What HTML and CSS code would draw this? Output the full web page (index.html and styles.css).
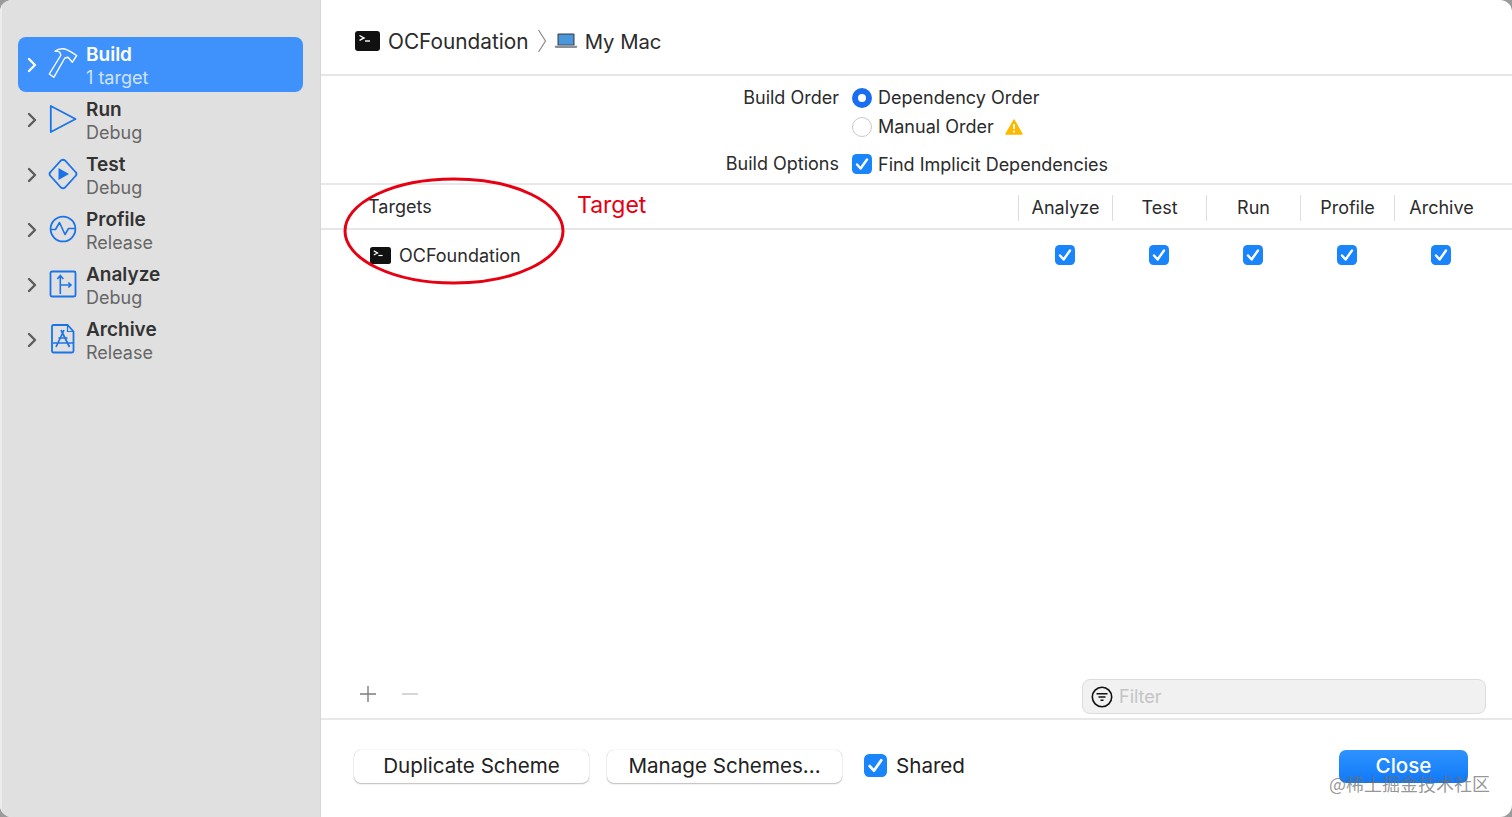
FILE: index.html
```html
<!DOCTYPE html>
<html lang="en">
<head>
<meta charset="utf-8">
<title>Scheme Editor</title>
<link rel="stylesheet" href="styles.css">
</head>
<body>
<svg class="defs" width="0" height="0" aria-hidden="true">
  <defs>
    <symbol id="chev" viewBox="0 0 10 16"><path d="M2 2l6 6-6 6" fill="none" stroke="currentColor" stroke-width="2.4" stroke-linecap="round" stroke-linejoin="round"/></symbol>
    <symbol id="term" viewBox="0 0 25 20"><rect x="0" y="0" width="25" height="20" rx="3" fill="#111"/><path d="M4.500 4.500l4.500 2.400-4.500 2.400" fill="none" stroke="#fff" stroke-width="1.400"/><path d="M10 10h5" stroke="#fff" stroke-width="1.400"/></symbol>
    <symbol id="check" viewBox="0 0 20 20"><rect width="20" height="20" rx="4.500" fill="#1a84fb"/><path d="M5 10.500l3.600 4L15 5.500" fill="none" stroke="#fff" stroke-width="2.400" stroke-linecap="round" stroke-linejoin="round"/></symbol>
  </defs>
</svg>
<div class="window">
  <aside class="sidebar">
    <div class="action selected">
      <svg class="chev"><use href="#chev"/></svg>
      <svg class="action-icon" viewBox="0 0 30 34"><path transform="translate(0 1)" d="M1.300 26L5.800 29.300 16.800 10l3.200-.8 4.400 5 4.300-6.700C24 5 20 1 15 .8c-3-.1-6 .7-8 2.400 2.500-.2 5 .8 5.500 2.800l.2 1.500z" fill="none" stroke="#fff" stroke-width="1.400" stroke-linejoin="round"/></svg>
      <div class="action-text"><span class="action-name">Build</span><span class="action-sub">1 target</span></div>
    </div>
    <div class="action">
      <svg class="chev"><use href="#chev"/></svg>
      <svg class="action-icon" viewBox="0 0 30 34"><path d="M2.800 4L27.500 17 2.800 30z" fill="none" stroke="#1a74e8" stroke-width="1.800" stroke-linejoin="round"/></svg>
      <div class="action-text"><span class="action-name">Run</span><span class="action-sub">Debug</span></div>
    </div>
    <div class="action">
      <svg class="chev"><use href="#chev"/></svg>
      <svg class="action-icon" viewBox="0 0 30 34"><path d="M13 3.500q2-1.600 4 0L27.500 15q2 2 0 4L17 30.500q-2 1.600-4 0L2.500 19q-2-2 0-4z" fill="none" stroke="#1a74e8" stroke-width="1.800"/><path d="M10.500 11L21 17l-10.500 6z" fill="#1a74e8"/></svg>
      <div class="action-text"><span class="action-name">Test</span><span class="action-sub">Debug</span></div>
    </div>
    <div class="action">
      <svg class="chev"><use href="#chev"/></svg>
      <svg class="action-icon" viewBox="0 0 30 34"><circle cx="15" cy="17" r="12.400" fill="none" stroke="#1a74e8" stroke-width="1.800"/><path d="M3 17.500h4.500L11.500 10.500l5.500 12 3.500-6H27" fill="none" stroke="#1a74e8" stroke-width="1.600" stroke-linejoin="round"/></svg>
      <div class="action-text"><span class="action-name">Profile</span><span class="action-sub">Release</span></div>
    </div>
    <div class="action">
      <svg class="chev"><use href="#chev"/></svg>
      <svg class="action-icon" viewBox="0 0 30 34"><rect x="2.500" y="4.500" width="25" height="25" rx="1.500" fill="none" stroke="#1a74e8" stroke-width="1.800"/><path d="M12.300 27V8.500M9.300 12l3-3.500 3 3.500M12.300 18H23M20.300 15.500L23 18l-2.700 2.500" fill="none" stroke="#1a74e8" stroke-width="1.600"/></svg>
      <div class="action-text"><span class="action-name">Analyze</span><span class="action-sub">Debug</span></div>
    </div>
    <div class="action">
      <svg class="chev"><use href="#chev"/></svg>
      <svg class="action-icon" viewBox="0 0 30 34"><path d="M5.500 3h14l6 6.500V29a1.500 1.500 0 0 1-1.500 1.500H5.500A1.500 1.500 0 0 1 4 29V4.500A1.500 1.500 0 0 1 5.500 3z" fill="none" stroke="#1a74e8" stroke-width="1.800"/><path d="M19.500 3v6.500h6" fill="none" stroke="#1a74e8" stroke-width="1.200"/><path d="M16 8L8 25M13 8l8.500 17M5 21h20M10.500 16h9" fill="none" stroke="#1a74e8" stroke-width="1.700"/></svg>
      <div class="action-text"><span class="action-name">Archive</span><span class="action-sub">Release</span></div>
    </div>
  </aside>

  <main class="main">
    <header class="crumbs">
      <svg class="crumb-term"><use href="#term"/></svg>
      <span>OCFoundation</span>
      <svg class="crumb-sep" viewBox="0 0 10 24"><path d="M1.500 1l7 11-7 11" fill="none" stroke="#8a8a8a" stroke-width="1.200"/></svg>
      <svg class="crumb-mac" viewBox="0 0 24 16"><path d="M3.500 1.500A1 1 0 0 1 4.500.5h15a1 1 0 0 1 1 1v11h-17z" fill="#3d3f45"/><rect x="4.600" y="1.600" width="14.800" height="10" fill="#4a98dc"/><path d="M.5 12.800h23l-.6 1.700q-.2.500-.8.500H1.900q-.6 0-.8-.5z" fill="#8d9097"/></svg>
      <span class="crumb-host">My Mac</span>
    </header>

    <section class="options">
      <div class="opt-label">Build Order</div>
      <div class="opt-line"><span class="radio on"></span><span>Dependency Order</span></div>
      <div class="opt-label"></div>
      <div class="opt-line"><span class="radio"></span><span>Manual Order</span>
        <svg class="warn" viewBox="0 0 18 16"><path d="M9 1L17 15H1z" fill="#fcb900" stroke="#fcb900" stroke-width="1.500" stroke-linejoin="round"/><path d="M9 5v5" stroke="#fff" stroke-width="1.800"/><circle cx="9" cy="12.600" r="1.100" fill="#fff"/></svg>
      </div>
      <div class="opt-label gap">Build Options</div>
      <div class="opt-line gap"><svg class="check"><use href="#check"/></svg><span>Find Implicit Dependencies</span></div>
    </section>

    <section class="targets">
      <div class="t-head">
        <div class="t-name">Targets</div>
        <div class="t-col">Analyze</div>
        <div class="t-col">Test</div>
        <div class="t-col">Run</div>
        <div class="t-col">Profile</div>
        <div class="t-col">Archive</div>
      </div>
      <div class="t-row">
        <div class="t-name target"><svg class="t-term"><use href="#term"/></svg><span>OCFoundation</span></div>
        <div class="t-cell"><svg class="check"><use href="#check"/></svg></div>
        <div class="t-cell"><svg class="check"><use href="#check"/></svg></div>
        <div class="t-cell"><svg class="check"><use href="#check"/></svg></div>
        <div class="t-cell"><svg class="check"><use href="#check"/></svg></div>
        <div class="t-cell"><svg class="check"><use href="#check"/></svg></div>
      </div>
      <svg class="ring" viewBox="0 0 224 110"><ellipse cx="112" cy="55" rx="109" ry="52" fill="none" stroke="#e60012" stroke-width="3"/></svg>
      <div class="annot">Target</div>
    </section>

    <div class="toolbar">
      <svg class="tool-btn" viewBox="0 0 18 18"><path d="M9 1v16M1 9h16" stroke="#7d7d7d" stroke-width="1.400"/></svg>
      <svg class="tool-btn minus" viewBox="0 0 18 18"><path d="M1 9h16" stroke="#c4c4c4" stroke-width="1.400"/></svg>
      <div class="filter">
        <svg class="filter-icon" viewBox="0 0 22 22"><circle cx="11" cy="11" r="9.700" fill="none" stroke="#111" stroke-width="1.600"/><path d="M5.500 7.800h11M7.500 11h7M9.500 14.200h3" stroke="#111" stroke-width="1.500"/></svg>
        <span>Filter</span>
      </div>
    </div>

    <footer class="footer">
      <button class="btn">Duplicate Scheme</button>
      <button class="btn">Manage Schemes...</button>
      <label class="shared"><svg class="check big"><use href="#check"/></svg><span>Shared</span></label>
      <button class="btn primary">Close</button>
    </footer>
  </main>
  <div class="watermark">@稀土掘金技术社区</div>
</div>
</body>
</html>
```
FILE: styles.css
```css
* { box-sizing: border-box; }
html, body { margin: 0; height: 100%; }
body { background: #9b9b9b; font-family: Inter, "Noto Sans", sans-serif; color: #222; overflow: hidden; }
.defs { position: absolute; }
.window { position: relative; display: flex; width: 1512px; height: 817px; background: #fff; border-radius: 12px; overflow: hidden; }

.sidebar { width: 321px; flex: none; padding: 37px 17px 0 16px; background: #e0e0e0; border-left: 2px solid #ececec; border-right: 1px solid #d6d6d6; display: flex; flex-direction: column; }
.action { height: 55px; display: flex; align-items: center; border-radius: 8px; color: #5d5d5d; padding-left: 9px; }
.chev { width: 10px; height: 16px; flex: none; }
.action-icon { width: 30px; height: 34px; flex: none; margin: -2px 8px 0 11px; }
.action-text { display: flex; flex-direction: column; font-size: 19px; line-height: 23px; margin-top: 3px; }
.action-name { font-weight: 600; color: #333; }
.action-sub { color: #666; font-size: 18px; }
.selected { background: #3f92fb; color: #fff; }
.selected .action-name { color: #fff; }
.selected .action-sub { color: #cfe3fd; }

.main { flex: 1; display: flex; flex-direction: column; min-width: 0; }
.crumbs { height: 76px; flex: none; display: flex; align-items: center; padding: 9px 0 0 34px; font-size: 20.800px; color: #2b2b2b; border-bottom: 2px solid #e6e6e6; }
.crumb-term { width: 25px; height: 20px; margin: -2px 8px 0 0; }
.crumb-sep { width: 10px; height: 24px; margin: -2px 7px 0 8px; }
.crumb-mac { width: 24px; height: 16px; margin: -2px 7px 0 0; }
.crumb-host { font-size: 20.300px; }

.options { display: grid; grid-template-columns: 518px 1fr; grid-template-rows: 29px 29px 38px; column-gap: 13px; padding-top: 7px; height: 109px; flex: none; font-size: 18px; color: #2b2b2b; border-bottom: 2px solid #e8e8e8; }
.opt-label { text-align: right; line-height: 29px; }
.opt-line { display: flex; align-items: center; gap: 6px; }
.gap { padding-top: 8px; }
.radio { width: 20px; height: 20px; border-radius: 50%; border: 1px solid #c9c9c9; background: #fff; flex: none; }
.radio.on { border: 6px solid #1a6ff0; }
.check { width: 20px; height: 20px; flex: none; }
.check.big { width: 23px; height: 23px; }
.warn { width: 18px; height: 16px; margin-left: 5px; }

.targets { position: relative; flex: 1; font-size: 18px; color: #2b2b2b; }
.t-head, .t-row { display: grid; grid-template-columns: 697px repeat(5, 94px); }
.t-head { height: 45px; border-bottom: 2px solid #e6e6e6; align-items: center; }
.t-name { padding-left: 47px; }
.t-col { height: 26px; margin-top: 2px; line-height: 26px; text-align: center; border-left: 1px solid #ddd; }
.t-row { height: 51px; align-items: center; }
.target { display: flex; align-items: center; padding-left: 49px; gap: 8px; }
.t-term { width: 21px; height: 17px; }
.t-cell { display: flex; justify-content: center; margin-top: -2px; }
.ring { position: absolute; left: 21px; top: -9px; width: 224px; height: 110px; }
.annot { position: absolute; left: 256px; top: 4px; font-size: 23px; line-height: 32px; color: #e60012; }

.toolbar { height: 45px; flex: none; display: flex; align-items: center; padding: 2px 26px 0 38px; }
.tool-btn { width: 18px; height: 18px; margin-top: -5px; }
.minus { margin-left: 24px; }
.filter { margin-left: auto; width: 404px; height: 35px; border: 1px solid #dcdcdc; border-radius: 8px; background: #f1f1f1; display: flex; align-items: center; padding-left: 8px; gap: 6px; font-size: 18px; color: #c4c4c4; }
.filter-icon { width: 22px; height: 22px; }

.footer { height: 99px; flex: none; border-top: 2px solid #e8e8e8; display: flex; align-items: flex-start; padding: 30px 44px 0 33px; font-size: 20.600px; }
.btn { height: 33px; font: inherit; line-height: 29px; color: #222; background: #fff; border: 0; border-radius: 7px; width: 235px; padding: 0 0 2px; box-shadow: 0 0 1px rgba(0,0,0,.25), 0 1px 1.500px rgba(0,0,0,.25); }
.btn + .btn { margin-left: 18px; }
.shared { display: flex; align-items: center; gap: 9px; margin: 4px 0 0 22px; color: #222; line-height: 23px; }
.btn.primary { margin-left: auto; width: 129px; color: #fff; font-weight: 500; background: linear-gradient(#2f92fd, #0f79fa); box-shadow: none; }

.watermark { position: absolute; left: 1329px; top: 771px; font-family: "Noto Sans CJK SC", sans-serif; font-size: 18px; line-height: 24px; color: rgba(110,110,110,.72); white-space: nowrap; }
```
